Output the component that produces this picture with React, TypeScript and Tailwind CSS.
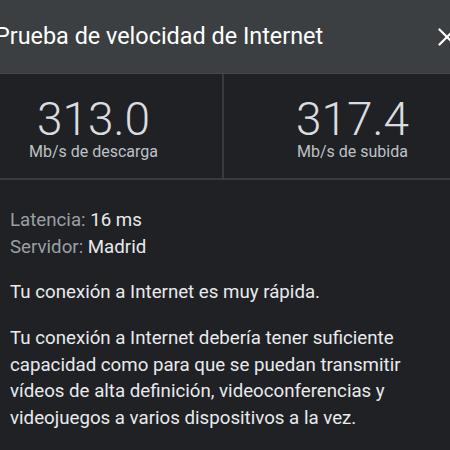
import { X } from 'lucide-react';

const font = { fontFamily: 'Roboto, "Liberation Sans", sans-serif' };

function Metric({ value, label }: { value: string; label: string }) {
    return (
        <div className="flex-1 flex flex-col items-center pt-[22px]">
            <span className="text-[46px] leading-[46px] font-light text-[#dadce0]">{value}</span>
            <span className="text-[16px] leading-[20px] text-[#bdc1c6]">{label}</span>
        </div>
    );
}

export default function App() {
    return (
        <div className="w-[450px] h-[450px] overflow-hidden bg-[#202124]" style={font}>
            <div className="w-[516px] ml-[-35px]">
                <div className="h-[74px] bg-[#3c3f42] border-b border-[#45484c] flex items-center justify-between pl-[30px] pr-[19px]">
                    <h1 className="text-[23.4px] text-white whitespace-nowrap">Prueba de velocidad de Internet</h1>
                    <X className="text-white" size={30} strokeWidth={1.8} />
                </div>
                <div className="flex h-[106px] border-b-2 border-[#3a3b3e]">
                    <Metric value="313.0" label="Mb/s de descarga" />
                    <div className="w-[2px] bg-[#3a3b3e]" />
                    <Metric value="317.4" label="Mb/s de subida" />
                </div>
                <div className="pl-[45px] pt-[27px] text-[18.7px] text-[#e8eaed]">
                    <div className="leading-[27px]">
                        <p>
                            <span className="text-[#9aa0a6]">Latencia: </span>16 ms
                        </p>
                        <p>
                            <span className="text-[#9aa0a6]">Servidor: </span>Madrid
                        </p>
                    </div>
                    <p className="leading-[27px] mt-[18px]">Tu conexión a Internet es muy rápida.</p>
                    <p className="leading-[26.5px] mt-[19px] w-[405px]">
                        Tu conexión a Internet debería tener suficiente capacidad como para que se puedan transmitir
                        vídeos de alta definición, videoconferencias y videojuegos a varios dispositivos a la vez.
                    </p>
                </div>
            </div>
        </div>
    );
}
